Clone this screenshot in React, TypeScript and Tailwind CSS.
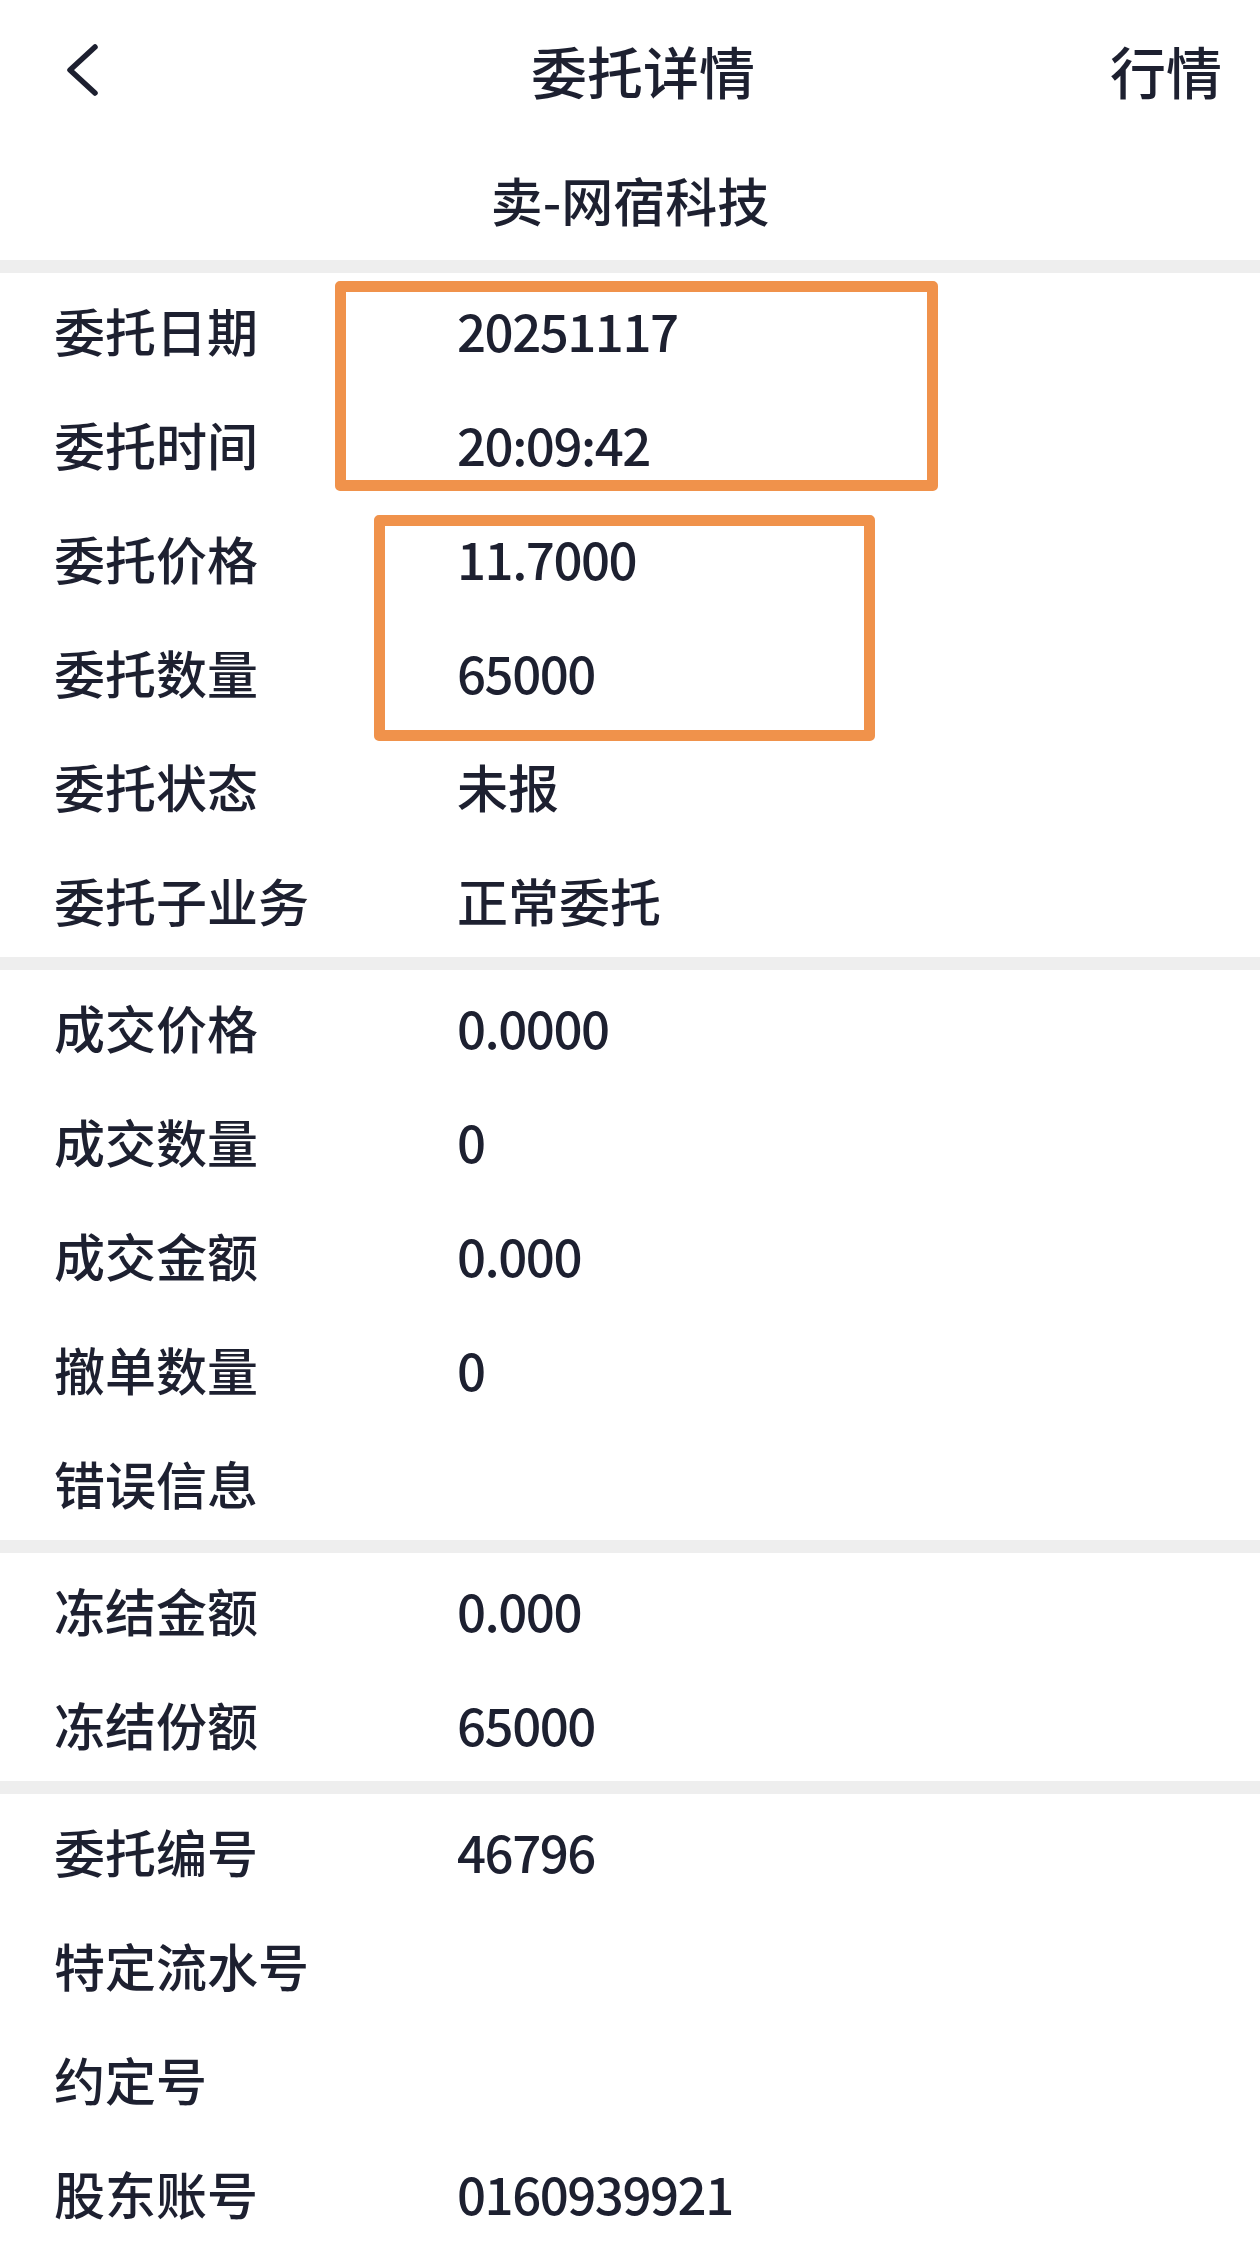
import React from "react";

type Row = { label: string; value?: string };

const sections: Row[][] = [
  [
    { label: "委托日期", value: "20251117" },
    { label: "委托时间", value: "20:09:42" },
    { label: "委托价格", value: "11.7000" },
    { label: "委托数量", value: "65000" },
    { label: "委托状态", value: "未报" },
    { label: "委托子业务", value: "正常委托" },
  ],
  [
    { label: "成交价格", value: "0.0000" },
    { label: "成交数量", value: "0" },
    { label: "成交金额", value: "0.000" },
    { label: "撤单数量", value: "0" },
    { label: "错误信息" },
  ],
  [
    { label: "冻结金额", value: "0.000" },
    { label: "冻结份额", value: "65000" },
  ],
  [
    { label: "委托编号", value: "46796" },
    { label: "特定流水号" },
    { label: "约定号" },
    { label: "股东账号", value: "0160939921" },
  ],
];

function Divider() {
  return <div className="h-[13px] w-full bg-[#eeeeee]" />;
}

function DetailRow({ row }: { row: Row }) {
  const numeric = /^[\d.:]+$/.test(row.value ?? "");
  return (
    <div className="flex h-[114px] items-center pl-[54px]">
      <span className="w-[403px] shrink-0">{row.label}</span>
      <span className={numeric ? "tracking-[-1.5px]" : ""}>{row.value ?? ""}</span>
    </div>
  );
}

export default function App() {
  return (
    <main
      className="min-h-[2261px] w-full bg-white font-medium text-[#1d2030]"
      style={{ fontFamily: '"Noto Sans CJK SC", "Noto Sans", sans-serif' }}
    >
      <header>
        <section className="flex h-[140px] items-center">
          <div className="flex w-[200px] items-center pl-[66px]">
            <svg width="34" height="54" viewBox="0 0 34 54" fill="none">
              <path
                d="M29 4 L4 27 L29 50"
                stroke="#1d2030"
                strokeWidth="5.5"
                strokeLinecap="round"
                strokeLinejoin="round"
              />
            </svg>
          </div>
          <h1 className="flex-1 pl-[26px] text-center text-[56px] leading-none">
            委托详情
          </h1>
          <div className="w-[200px] pr-[38px] text-right text-[56px] leading-none">
            行情
          </div>
        </section>
        <section className="flex h-[120px] items-center justify-center text-[52px] leading-none">
          卖-网宿科技
        </section>
      </header>

      <div className="text-[51px] leading-none">
        {sections.map((rows, i) => (
          <React.Fragment key={i}>
            <Divider />
            <section className="relative">
              {rows.map((row) => (
                <DetailRow key={row.label} row={row} />
              ))}
              {i === 0 && (
                <>
                  <div className="pointer-events-none absolute left-[335px] top-[8px] h-[210px] w-[603px] rounded-[5px] border-[11px] border-[#f0924b]" />
                  <div className="pointer-events-none absolute left-[374px] top-[242px] h-[226px] w-[501px] rounded-[5px] border-[11px] border-[#f0924b]" />
                </>
              )}
            </section>
          </React.Fragment>
        ))}
      </div>
    </main>
  );
}
